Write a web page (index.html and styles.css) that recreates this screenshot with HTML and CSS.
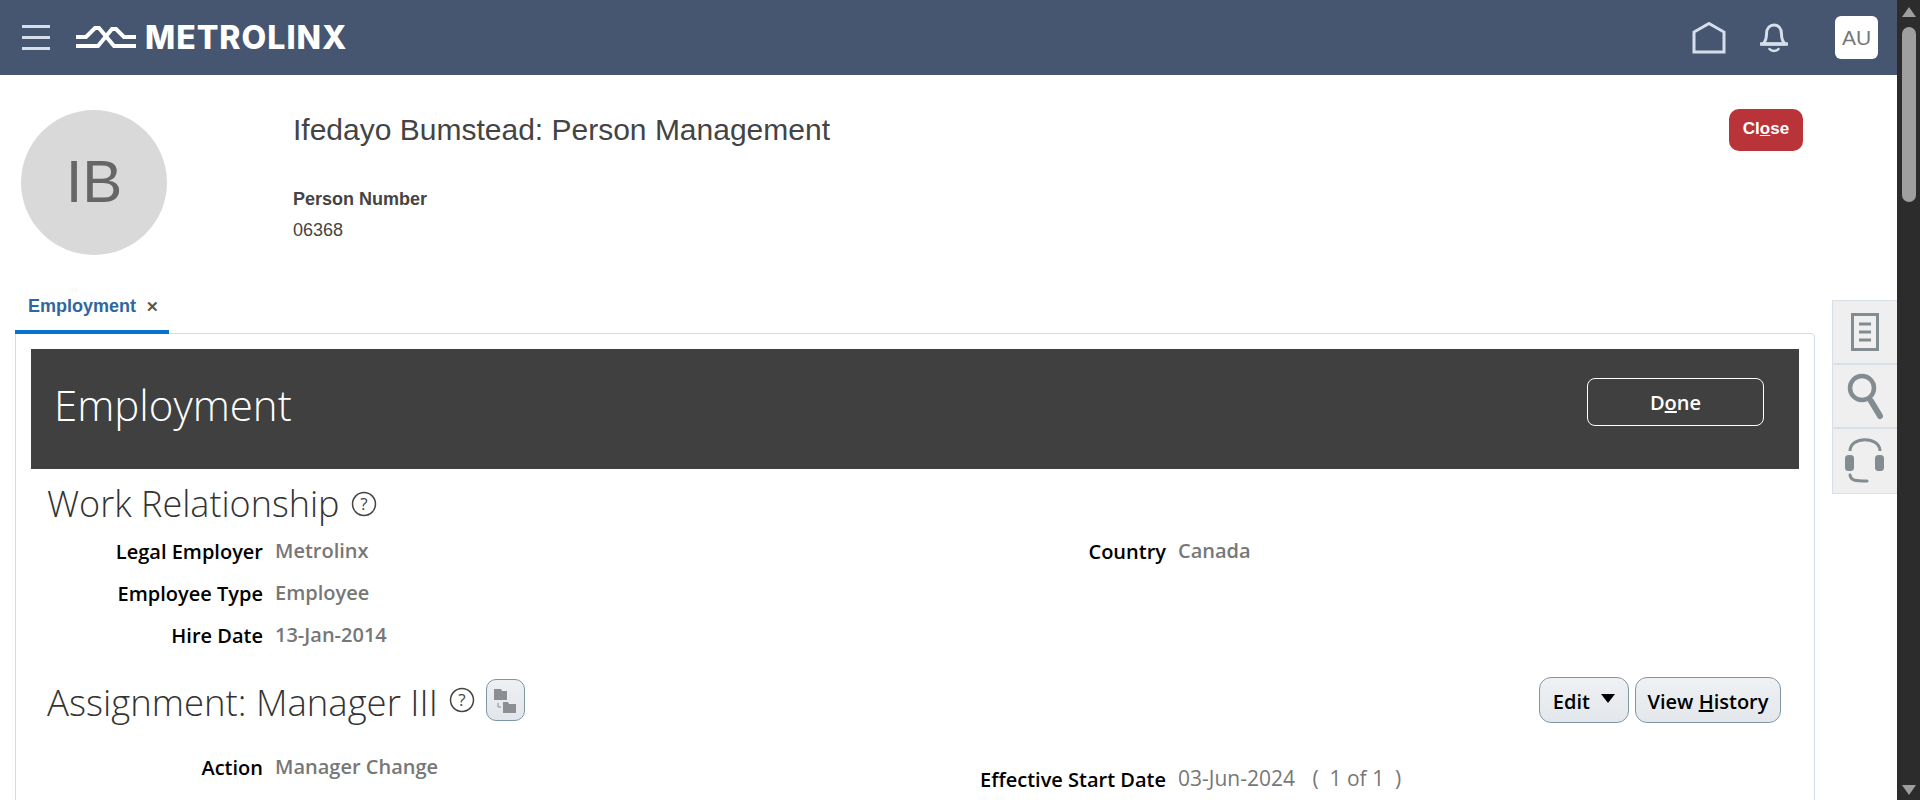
FILE: index.html
```html
<!DOCTYPE html>
<html>
<head>
    <title>Person Management</title>
    <link rel="stylesheet" href="styles.css">
</head>
<body>
<div class="app">
    <div class="main">
        <header class="topbar">
            <div class="burger"><span></span><span></span><span></span></div>
            <svg class="logo-mark" width="60" height="24" viewBox="0 0 60 24">
                <path d="M0 11H10L19 2H23L38 20H60" fill="none" stroke="#fff" stroke-width="4"/>
                <path d="M0 20H22L36 3H40L48 11H60" fill="none" stroke="#fff" stroke-width="4"/>
            </svg>
            <span class="logo-text">METROLINX</span>
            <svg class="home-icon" width="34" height="32" viewBox="0 0 34 32">
                <path d="M2 30V10L17 1.500L32 10V30Z" fill="none" stroke="#d5deea" stroke-width="3"/>
            </svg>
            <svg class="bell-icon" width="28" height="30" viewBox="0 0 28 30">
                <path d="M3 21C6 18 6.500 16 6.500 11C6.500 5 10 2 14 2S21.500 5 21.500 11C21.500 16 22 18 25 21Z" fill="none" stroke="#d5deea" stroke-width="3" stroke-linejoin="round"/>
                <path d="M1 21H27" stroke="#d5deea" stroke-width="3.500" stroke-linecap="round"/>
                <path d="M9.500 26C11.500 28.500 16.500 28.500 18.500 26" fill="none" stroke="#d5deea" stroke-width="2.500" stroke-linecap="round"/>
            </svg>
            <div class="user-badge">AU</div>
        </header>

        <section class="person">
            <div class="avatar">IB</div>
            <div class="person-info">
                <h1>Ifedayo Bumstead: Person Management</h1>
                <div class="person-label">Person Number</div>
                <div class="person-number">06368</div>
            </div>
            <button class="close-btn">Cl<u>o</u>se</button>
        </section>

        <div class="tabs">
            <div class="tab">Employment <span class="tab-x">&#10005;</span></div>
        </div>

        <div class="panel">
            <div class="page-bar">
                <h2>Employment</h2>
                <button class="done-btn">D<u>o</u>ne</button>
            </div>

            <div class="section-head">
                <h3>Work Relationship</h3>
                <svg class="help" width="26" height="26" viewBox="0 0 26 26">
                    <circle cx="13" cy="13" r="11.500" fill="none" stroke="#444" stroke-width="1.500"/>
                    <text x="13" y="19" text-anchor="middle" class="help-mark">?</text>
                </svg>
            </div>
            <div class="form">
                <div class="field"><label>Legal Employer</label><span>Metrolinx</span></div>
                <div class="field"><label>Country</label><span>Canada</span></div>
                <div class="field"><label>Employee Type</label><span>Employee</span></div>
                <div></div>
                <div class="field"><label>Hire Date</label><span>13-Jan-2014</span></div>
            </div>

            <div class="section-head assignment-head">
                <h3>Assignment: Manager III</h3>
                <svg class="help" width="26" height="26" viewBox="0 0 26 26">
                    <circle cx="13" cy="13" r="11.500" fill="none" stroke="#444" stroke-width="1.500"/>
                    <text x="13" y="19" text-anchor="middle" class="help-mark">?</text>
                </svg>
                <button class="icon-btn">
                    <svg width="24" height="26" viewBox="0 0 24 26">
                        <path d="M1 2H8L9 4H14V13H1Z" fill="#8b8f94"/>
                        <path d="M10 15H15L16 17H23V26H10Z" fill="#8b8f94"/>
                        <path d="M5 16V20H8" fill="none" stroke="#8b8f94" stroke-width="1"/>
                    </svg>
                </button>
                <div class="actions">
                    <button class="btn btn-edit">Edit <span class="caret"></span></button>
                    <button class="btn btn-history">View <u>H</u>istory</button>
                </div>
            </div>
            <div class="form">
                <div class="field"><label>Action</label><span>Manager Change</span></div>
                <div class="field field-low"><label>Effective Start Date</label><span>03-Jun-2024 <em class="paging">( &nbsp;1 of 1 &nbsp;)</em></span></div>
            </div>
        </div>

        <div class="side-tools">
            <div class="side-tool">
                <svg width="28" height="38" viewBox="0 0 28 38">
                    <rect x="1.500" y="1.500" width="25" height="35" fill="none" stroke="#838c90" stroke-width="3"/>
                    <path d="M8 11H20M8 19H20M8 27H20" stroke="#838c90" stroke-width="3"/>
                </svg>
            </div>
            <div class="side-tool">
                <svg width="36" height="48" viewBox="0 0 36 48">
                    <circle cx="15" cy="16" r="12" fill="none" stroke="#838c90" stroke-width="4.500"/>
                    <path d="M24 29L33 44" stroke="#838c90" stroke-width="6" stroke-linecap="round"/>
                </svg>
            </div>
            <div class="side-tool">
                <svg width="42" height="48" viewBox="0 0 42 48">
                    <path d="M6 14C6 -1 36 -1 36 14" fill="none" stroke="#838c90" stroke-width="3"/>
                    <rect x="1" y="18" width="9" height="16" rx="3.500" fill="#838c90"/>
                    <rect x="31" y="18" width="9" height="16" rx="3.500" fill="#838c90"/>
                    <path d="M6 38C7 44 12 44 23 44" fill="none" stroke="#838c90" stroke-width="3" stroke-linecap="round"/>
                </svg>
            </div>
        </div>
    </div>

    <div class="scrollbar">
        <div class="arrow-up"></div>
        <div class="thumb"></div>
        <div class="arrow-down"></div>
    </div>
</div>
</body>
</html>
```

FILE: styles.css
```css
body {
    margin: 0;
    font-family: "Liberation Sans", Arial, sans-serif;
    background-color: #fff;
}
h1, h2, h3 {
    margin: 0;
    font-weight: 300;
}
button {
    font-family: inherit;
    cursor: pointer;
}
.app {
    display: flex;
    height: 800px;
    overflow: hidden;
}
.main {
    position: relative;
    flex: 1;
    min-width: 0;
}

/* top bar */
.topbar {
    display: flex;
    align-items: center;
    height: 75px;
    padding: 0 19px 0 22px;
    background-color: #465671;
}
.burger {
    display: flex;
    flex-direction: column;
    gap: 8px;
    width: 28px;
}
.burger span {
    height: 3px;
    background-color: #d5deea;
}
.logo-mark {
    margin-left: 26px;
}
.logo-text {
    margin-left: 9px;
    font-family: Inter, Roboto, sans-serif;
    font-size: 32px;
    font-weight: 800;
    color: #fff;
    letter-spacing: 1px;
}
.home-icon {
    margin-left: auto;
}
.bell-icon {
    margin-left: 34px;
}
.user-badge {
    display: flex;
    align-items: center;
    justify-content: center;
    width: 43px;
    height: 43px;
    margin-left: 47px;
    border-radius: 6px;
    background-color: #fff;
    color: #777;
    font-size: 21px;
}

/* person header */
.person {
    display: flex;
    height: 215px;
    color: #444;
}
.avatar {
    display: flex;
    align-items: center;
    justify-content: center;
    flex-shrink: 0;
    width: 146px;
    height: 145px;
    padding-bottom: 3px;
    box-sizing: border-box;
    margin: 35px 0 0 21px;
    border-radius: 50%;
    background-color: #d9d9d9;
    color: #666;
    font-size: 60px;
}
.person-info {
    margin-left: 126px;
}
.person-info h1 {
    margin-top: 39px;
    font-size: 30px;
    line-height: 32px;
    font-weight: 400;
}
.person-label {
    margin-top: 43px;
    font-size: 18px;
    font-weight: 700;
    line-height: 20px;
}
.person-number {
    margin-top: 11px;
    font-size: 18px;
    line-height: 20px;
}
.close-btn {
    width: 74px;
    height: 42px;
    margin: 34px 94px 0 auto;
    padding: 0 0 2px;
    border: none;
    border-radius: 10px;
    background-color: #b83439;
    color: #fff;
    font-size: 17px;
    font-weight: 700;
}

/* tabs */
.tabs {
    display: flex;
    margin-left: 15px;
}
.tab {
    position: relative;
    width: 154px;
    padding: 6px 0 0 13px;
    box-sizing: border-box;
    height: 44px;
    border-bottom: 4px solid #0572ce;
    color: #30669f;
    font-size: 18px;
    font-weight: 700;
    line-height: 20px;
}
.tab-x {
    margin-left: 5px;
    color: #555;
    font-size: 15px;
}

/* main panel */
.panel {
    height: 600px;
    margin: -1px 82px 0 15px;
    padding: 15px 15px 0;
    border: 1px solid #d3dde9;
    border-radius: 0 4px 0 0;
}
.page-bar {
    display: flex;
    align-items: center;
    justify-content: space-between;
    height: 120px;
    padding: 0 35px 14px 23px;
    box-sizing: border-box;
    background-color: #404040;
    color: #fff;
}
.page-bar h2 {
    margin-top: 4px;
    font-family: "Open Sans", sans-serif;
    font-size: 42px;
}
.done-btn {
    width: 177px;
    height: 48px;
    border: 1px solid #fff;
    border-radius: 8px;
    background: none;
    color: #fff;
    font-family: "Open Sans", sans-serif;
    font-size: 20px;
    font-weight: 600;
}
.section-head {
    display: flex;
    align-items: center;
    gap: 11px;
    height: 50px;
    padding: 10px 18px 0 16px;
}
.section-head h3 {
    font-family: "Open Sans", sans-serif;
    font-size: 36px;
    line-height: 50px;
    color: #333;
}
.assignment-head {
    height: 48px;
    padding-top: 21px;
    padding-bottom: 21px;
}
.assignment-head h3 {
    padding-top: 4px;
    font-size: 36.500px;
    line-height: 46px;
}
.help-mark {
    font-family: "Open Sans", sans-serif;
    font-size: 17px;
    fill: #444;
}
.icon-btn {
    display: flex;
    align-items: center;
    justify-content: center;
    width: 39px;
    height: 42px;
    padding: 0;
    border: 1px solid #7f95a8;
    border-radius: 10px;
    background: linear-gradient(#eef0f2, #e2e6ea);
}
.actions {
    display: flex;
    gap: 6px;
    margin-left: auto;
}
.btn {
    height: 46px;
    padding: 3px 0 0;
    border: 1px solid #7f95a8;
    border-radius: 12px;
    background: linear-gradient(#eff1f3, #e3e7eb);
    color: #000;
    font-family: "Open Sans", sans-serif;
    font-size: 20px;
    font-weight: 600;
}
.btn-edit {
    width: 90px;
}
.btn-history {
    width: 146px;
}
.caret {
    display: inline-block;
    margin: 0 0 6px 6px;
    border-left: 7px solid transparent;
    border-right: 7px solid transparent;
    border-top: 9px solid #000;
}

/* label and value rows */
.form {
    display: grid;
    grid-template-columns: 903px 1fr;
}
.field {
    display: grid;
    grid-template-columns: 232px 1fr;
    column-gap: 12px;
    align-items: center;
    height: 42px;
    font-family: "Open Sans", sans-serif;
    font-size: 20px;
    font-weight: 600;
}
.field label {
    color: #000;
    text-align: right;
    padding-top: 2px;
}
.field span {
    color: #777;
}
.field-low {
    margin-top: 12px;
}
.field-low span {
    font-size: 21px;
    font-weight: 400;
}
.paging {
    margin-left: 12px;
    font-style: normal;
}

/* floating tools on the right */
.side-tools {
    position: absolute;
    top: 300px;
    right: 0;
    width: 65px;
    border: 1px solid #d8dfe6;
    border-right: none;
    box-sizing: border-box;
    background-color: #efefef;
}
.side-tool {
    display: flex;
    align-items: center;
    justify-content: center;
    height: 64px;
    border-bottom: 2px solid #d8dfe6;
    box-sizing: border-box;
}
.side-tool:last-child {
    border-bottom: none;
}

/* scrollbar */
.scrollbar {
    display: flex;
    flex-direction: column;
    align-items: center;
    flex-shrink: 0;
    width: 23px;
    padding: 7px 0 5px;
    box-sizing: border-box;
    background-color: #2c2c2c;
}
.arrow-up {
    border-left: 7px solid transparent;
    border-right: 7px solid transparent;
    border-bottom: 10px solid #9f9f9f;
}
.thumb {
    width: 14px;
    height: 175px;
    margin-top: 10px;
    border-radius: 7px;
    background-color: #9f9f9f;
}
.arrow-down {
    margin-top: auto;
    border-left: 7px solid transparent;
    border-right: 7px solid transparent;
    border-top: 10px solid #9f9f9f;
}
```
